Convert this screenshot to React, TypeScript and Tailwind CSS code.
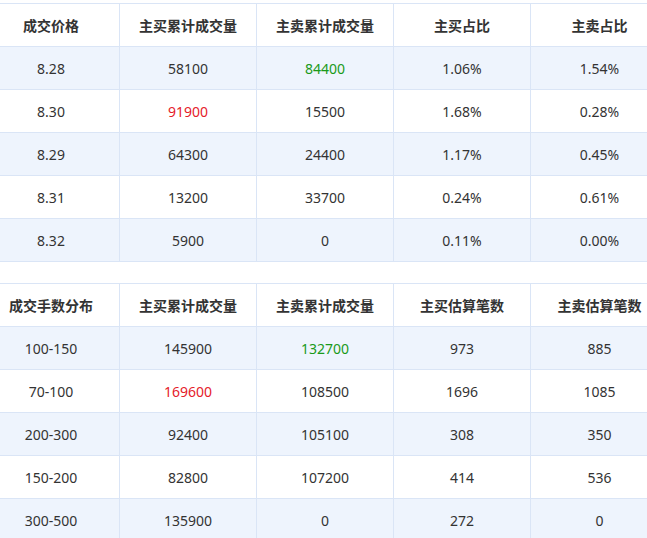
const t1 = {
  head: ["成交价格", "主买累计成交量", "主卖累计成交量", "主买占比", "主卖占比"],
  rows: [
    ["8.28", "58100", "84400", "1.06%", "1.54%"],
    ["8.30", "91900", "15500", "1.68%", "0.28%"],
    ["8.29", "64300", "24400", "1.17%", "0.45%"],
    ["8.31", "13200", "33700", "0.24%", "0.61%"],
    ["8.32", "5900", "0", "0.11%", "0.00%"],
  ],
};
const t2 = {
  head: ["成交手数分布", "主买累计成交量", "主卖累计成交量", "主买估算笔数", "主卖估算笔数"],
  rows: [
    ["100-150", "145900", "132700", "973", "885"],
    ["70-100", "169600", "108500", "1696", "1085"],
    ["200-300", "92400", "105100", "308", "350"],
    ["150-200", "82800", "107200", "414", "536"],
    ["300-500", "135900", "0", "272", "0"],
  ],
};

function Table({ d }: { d: typeof t1 }) {
  return (
    <div className="ml-[-17px] w-[685px] border-t border-[#dae5f6]">
      <div className="flex h-[43px] bg-white border-b border-[#dae5f6] font-bold text-[14px] text-[#333]">
        {d.head.map((h, i) => (
          <div key={i} className={`w-[137px] flex items-center justify-center ${i < 4 ? "border-r border-[#dae5f6]" : ""}`}>{h}</div>
        ))}
      </div>
      {d.rows.map((r, ri) => (
        <div key={ri} className={`flex h-[43px] border-b border-[#dae5f6] text-[14px] text-[#333] ${ri % 2 === 0 ? "bg-[#eef4fd]" : "bg-white"}`}>
          {r.map((c, i) => (
            <div key={i} className={`w-[137px] flex items-center justify-center ${i < 4 ? "border-r border-[#dae5f6]" : ""} ${ri === 0 && i === 2 ? "text-[#1a9a1a]" : ""} ${ri === 1 && i === 1 ? "text-[#e5202a]" : ""}`}>{c}</div>
          ))}
        </div>
      ))}
    </div>
  );
}

export default function App() {
  return (
    <div className="w-[647px] h-[538px] overflow-hidden bg-white pt-[3px]" style={{ fontFamily: '"Noto Sans", "Noto Sans CJK SC", sans-serif' }}>
      <Table d={t1} />
      <div className="h-[21px]" />
      <Table d={t2} />
    </div>
  );
}
